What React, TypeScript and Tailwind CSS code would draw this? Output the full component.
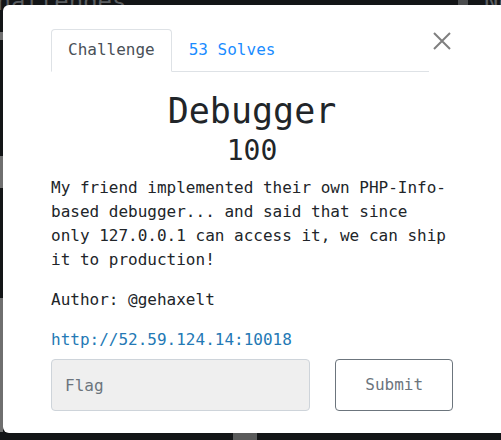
const mono = "font-['DejaVu_Sans_Mono','Liberation_Mono',monospace]";

function CloseIcon() {
  return (
    <svg width="18" height="18" viewBox="0 0 18 18" className="text-[#7f7f7f]">
      <path d="M1 1L17 17M17 1L1 17" stroke="currentColor" strokeWidth="2" />
    </svg>
  );
}

export default function App() {
  return (
    <div className={`relative w-[501px] h-[440px] overflow-hidden bg-[#131517] ${mono}`}>
      {/* page behind the overlay */}
      <span className="absolute left-[-18px] top-[-16px] text-[24px] text-[#5a5d60]">Challenges</span>
      <div className="absolute left-[458px] top-0 w-[10px] h-[5px] bg-[#4a4c4e]" />
      <span className="absolute left-[484px] top-[-16px] text-[24px] text-[#5a5d60]">No</span>
      <div className="absolute left-0 top-[32px] w-[3px] h-[8px] bg-[#6f6f6f]" />
      <div className="absolute left-0 top-[156px] w-[3px] h-[32px] bg-[#6f6f6f]" />
      <div className="absolute left-0 top-[298px] w-[3px] h-[134px] bg-[#6f6f6f]" />
      <div className="absolute left-[233px] top-[433px] w-[24px] h-[7px] bg-[#5a5a5a]" />

      {/* modal */}
      <div className="absolute left-[3px] top-[5px] w-[530px] h-[428px] bg-white rounded-[6px]">
        <div className="pl-[48px] pt-[24px] w-[449px]">
          {/* tabs */}
          <div className="flex items-start">
            <div className="flex w-[378px] border-b border-[#dee2e6]">
              <div className="px-4 py-2 -mb-px border border-[#dee2e6] border-b-white rounded-t bg-white text-[16px] leading-6 text-[#495057]">
                Challenge
              </div>
              <div className="px-4 py-2 border border-transparent text-[16px] leading-6 text-[#1a8cff]">
                53 Solves
              </div>
            </div>
            <div className="ml-[4px] mt-[3px]">
              <CloseIcon />
            </div>
          </div>

          {/* body */}
          <div className="w-[402px] text-[#212529]">
            <h3 className="mt-[17px] text-center text-[35px] leading-[45px]">Debugger</h3>
            <h4 className="text-center text-[28px] leading-[34px]">100</h4>
            <div className="mt-[8px] text-[16px] leading-6">
              <p className="mb-4">
                My friend implemented their own PHP-Info-based debugger... and said that since only 127.0.0.1 can
                access it, we can ship it to production!
              </p>
              <p className="mb-4">Author: @gehaxelt</p>
              <p>
                <a className="text-[#2479b5]">http://52.59.124.14:10018</a>
              </p>
            </div>
            <div className="flex mt-[7px]">
              <input
                placeholder="Flag"
                className={`w-[260px] h-[52px] px-[13px] rounded bg-[#efefef] border border-[#ced4da] text-[16px] placeholder:text-[#6c757d] ${mono}`}
              />
              <button
                className={`ml-[25px] w-[118px] h-[52px] rounded border border-[#6c757d] text-[16px] text-[#6c757d] bg-white ${mono}`}
              >
                Submit
              </button>
            </div>
          </div>
        </div>
      </div>
    </div>
  );
}
